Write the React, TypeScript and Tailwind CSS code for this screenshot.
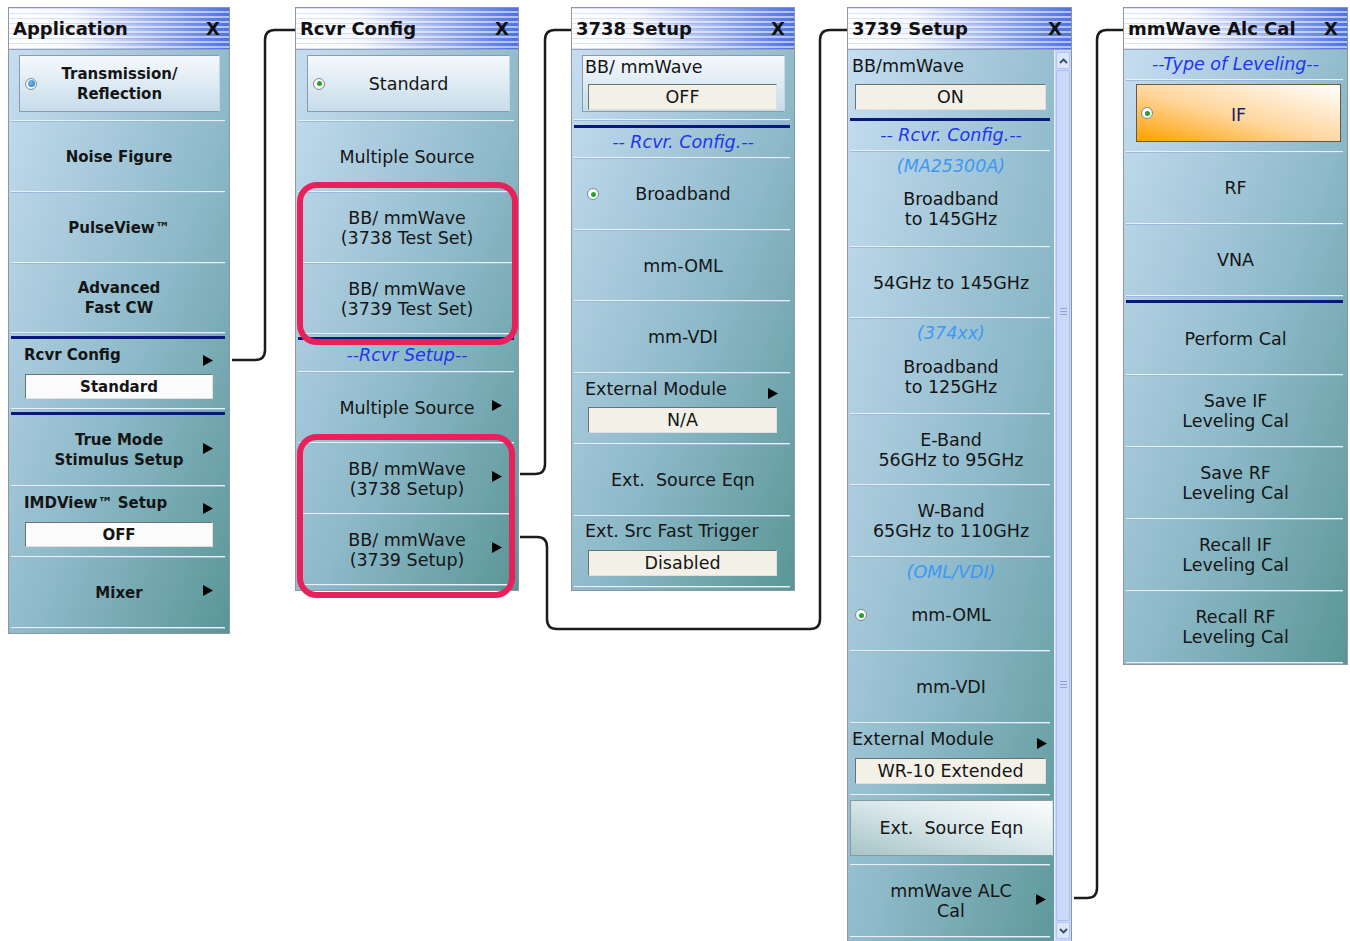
import clsx from 'clsx'
import type { ReactNode } from 'react'

const BODY = 'bg-[linear-gradient(to_bottom_right,#c6ddf1,#8db9c9_55%,#5a9696)]'

function Header({ title }: { title: string }) {
  return (
    <div className="flex h-[42px] items-center justify-between border-b border-[#9aa3ad] bg-[repeating-linear-gradient(180deg,rgba(70,105,220,0.18)_0px,rgba(70,105,220,0.18)_1px,transparent_1px,transparent_3px,rgba(255,255,255,0.55)_3px,rgba(255,255,255,0.55)_5px),linear-gradient(90deg,#ffffff_0%,#f2f5fd_30%,#4d72e3_100%)] pl-[4px] pr-[9px]">
      <span className="whitespace-nowrap text-[18px] font-bold text-[#111]">{title}</span>
      <span className="text-[18px] font-bold text-[#111]">X</span>
    </div>
  )
}

function Panel({
  title,
  className,
  bodyClass,
  children,
}: {
  title: string
  className: string
  bodyClass: string
  children: ReactNode
}) {
  return (
    <div className={clsx('shrink-0 border border-[#8e979f] bg-white', className)}>
      <Header title={title} />
      <div className={clsx(BODY, 'text-[#151515]', bodyClass)}>{children}</div>
    </div>
  )
}

function Sep() {
  return <div className="ml-[2px] mr-[4px] h-[2px] bg-[linear-gradient(#e9f1fa_50%,#9db9da_50%)]" />
}

function Navy({ className = '' }: { className?: string }) {
  return <div className={clsx('ml-[2px] mr-[4px] h-[3px] bg-[#0a1780]', className)} />
}

function Arrow({ className = '' }: { className?: string }) {
  return (
    <svg width="10" height="11" viewBox="0 0 10 11" className={clsx('shrink-0', className)}>
      <polygon points="0,0 10,5.5 0,11" fill="#000" />
    </svg>
  )
}

function Radio({ blue = false }: { blue?: boolean }) {
  return (
    <span className="flex h-[12px] w-[12px] items-center justify-center rounded-full border border-[#7d8c99] bg-[radial-gradient(circle,#ffffff_55%,#d5dde4)]">
      <span
        className={
          blue
            ? 'h-[7px] w-[7px] rounded-full bg-[radial-gradient(circle_at_40%_40%,#74bbf2,#1f6db6)]'
            : 'h-[5px] w-[5px] rounded-full bg-[#26a326]'
        }
      />
    </span>
  )
}

function Lines({ lines }: { lines: string[] }) {
  return (
    <div className="flex flex-col items-center whitespace-nowrap leading-[20px]">
      {lines.map((l) => (
        <span key={l}>{l}</span>
      ))}
    </div>
  )
}

function Cell({
  h,
  lines,
  radio,
  radioCls = 'ml-[5px]',
  arrow,
  arrowCls = 'ml-[2px]',
}: {
  h: string
  lines: string[]
  radio?: ReactNode
  radioCls?: string
  arrow?: boolean
  arrowCls?: string
}) {
  return (
    <div className={clsx('grid grid-cols-[28px_minmax(0,1fr)_28px] items-center', h)}>
      <div className={clsx('flex', radioCls)}>{radio}</div>
      <Lines lines={lines} />
      <div className="flex">{arrow && <Arrow className={clsx('mb-[4px]', arrowCls)} />}</div>
    </div>
  )
}

function Field({ className, white, children }: { className: string; white?: boolean; children: ReactNode }) {
  return (
    <div
      className={clsx(
        'flex items-center justify-center whitespace-nowrap border border-t-[#707070] border-l-[#707070] border-b-[#e0e0e0] border-r-[#e0e0e0] leading-[20px]',
        white ? 'bg-[#fbfbfb]' : 'bg-[#f3f1e7]',
        className
      )}
    >
      {children}
    </div>
  )
}

function FieldCell({
  h,
  label,
  value,
  arrow,
  rowCls,
  arrowCls = '',
  fieldCls,
  white,
}: {
  h: string
  label: string
  value: string
  arrow?: boolean
  rowCls: string
  arrowCls?: string
  fieldCls: string
  white?: boolean
}) {
  return (
    <div className={h}>
      <div className={clsx('flex items-start justify-between leading-[20px]', rowCls)}>
        <span className="whitespace-nowrap">{label}</span>
        {arrow && <Arrow className={arrowCls} />}
      </div>
      <Field className={fieldCls} white={white}>
        {value}
      </Field>
    </div>
  )
}

function SelBox({ className, lines, blue }: { className: string; lines: string[]; blue?: boolean }) {
  return (
    <div
      className={clsx(
        'grid h-[57px] grid-cols-[24px_minmax(0,1fr)_24px] items-center border border-[#8d99a3] border-r-[#c9d7e0] bg-[linear-gradient(to_bottom,#f5f9fc,#c6dcea)]',
        className
      )}
    >
      <div className="flex pl-[5px]">
        <Radio blue={blue} />
      </div>
      <Lines lines={lines} />
      <div />
    </div>
  )
}

function Section({ h, text, light }: { h: string; text: string; light?: boolean }) {
  return (
    <div
      className={clsx(
        'flex items-center justify-center whitespace-nowrap italic',
        h,
        light ? 'text-[#3d98f4]' : 'text-[#1f34f2]'
      )}
    >
      {text}
    </div>
  )
}

function SubCell({
  h,
  sub,
  lines,
  gap,
  radio,
}: {
  h: string
  sub: string
  lines: string[]
  gap: string
  radio?: boolean
}) {
  return (
    <div className={clsx('flex flex-col', h)}>
      <div className="flex justify-center pt-[4px] italic leading-[20px] text-[#3d98f4]">{sub}</div>
      <div className={clsx('grid grid-cols-[28px_minmax(0,1fr)_28px] items-center', gap)}>
        <div className="ml-[7px] flex">{radio && <Radio />}</div>
        <Lines lines={lines} />
        <div />
      </div>
    </div>
  )
}

function Grip() {
  return (
    <div className="flex flex-col gap-[2px]">
      <div className="h-px w-[7px] bg-[#8ea4e0]" />
      <div className="h-px w-[7px] bg-[#8ea4e0]" />
      <div className="h-px w-[7px] bg-[#8ea4e0]" />
    </div>
  )
}

function ScrollBar() {
  return (
    <div className="flex w-[17px] shrink-0 flex-col border-l border-[#e8eefc] bg-[#c7d5fb]">
      <div className="mx-[1px] mt-[2px] flex h-[17px] items-center justify-center rounded-[2px] border border-[#b4c6f4] bg-[#dbe5fd]">
        <svg width="9" height="6" viewBox="0 0 9 6">
          <path d="M1 5 L4.5 1.5 L8 5" stroke="#3b4868" strokeWidth="1.8" fill="none" />
        </svg>
      </div>
      <div className="mx-[1px] mt-[1px] flex flex-1 flex-col items-center rounded-[2px] border border-[#aebff0] bg-[#cad8fc]">
        <div className="mt-[237px]">
          <Grip />
        </div>
        <div className="mt-[366px]">
          <Grip />
        </div>
      </div>
      <div className="mx-[1px] mb-[2px] mt-[1px] flex h-[17px] items-center justify-center rounded-[2px] border border-[#b4c6f4] bg-[#dbe5fd]">
        <svg width="9" height="6" viewBox="0 0 9 6">
          <path d="M1 1 L4.5 4.5 L8 1" stroke="#3b4868" strokeWidth="1.8" fill="none" />
        </svg>
      </div>
    </div>
  )
}

function Connectors() {
  return (
    <svg className="pointer-events-none absolute left-0 top-0" width="1350" height="941" viewBox="0 0 1350 941">
      <g stroke="#1c1c1c" strokeWidth="2.5" fill="none">
        <path d="M232 360 H255 Q265 360 265 350 V40 Q265 30 275 30 H295" />
        <path d="M520 474 H535 Q545 474 545 464 V40 Q545 30 555 30 H571" />
        <path d="M520 537 H537 Q547 537 547 547 V619 Q547 629 557 629 H810 Q820 629 820 619 V40 Q820 30 830 30 H847" />
        <path d="M1074 898 H1087 Q1097 898 1097 888 V40 Q1097 30 1107 30 H1123" />
      </g>
    </svg>
  )
}

export default function App() {
  return (
    <div className="relative h-[941px] w-[1350px] overflow-hidden bg-white font-['DejaVu_Sans',sans-serif]">
      <div className="flex items-start pt-[7px]">
        {/* Application */}
        <Panel title="Application" className="ml-[8px] w-[222px]" bodyClass="pb-[4px] text-[15px] font-bold">
          <div className="h-[70px] pt-[5px]">
            <SelBox className="ml-[10px] mr-[9px]" lines={['Transmission/', 'Reflection']} blue />
          </div>
          <Sep />
          <Cell h="h-[69px]" lines={['Noise Figure']} />
          <Sep />
          <Cell h="h-[69px]" lines={['PulseView™']} />
          <Sep />
          <Cell h="h-[68px]" lines={['Advanced', 'Fast CW']} />
          <Sep />
          <Navy className="mt-[2px]" />
          <FieldCell
            h="h-[69px]"
            label="Rcvr Config"
            value="Standard"
            arrow
            white
            rowCls="pl-[15px] pr-[16px] pt-[6px]"
            arrowCls="mt-[10px]"
            fieldCls="mx-[16px] mt-[8px] h-[25px]"
          />
          <Sep />
          <Navy className="mt-[2px]" />
          <Cell h="h-[70px]" lines={['True Mode', 'Stimulus Setup']} arrow />
          <Sep />
          <FieldCell
            h="h-[69px]"
            label="IMDView™ Setup"
            value="OFF"
            arrow
            white
            rowCls="pl-[15px] pr-[16px] pt-[6px]"
            arrowCls="mt-[10px]"
            fieldCls="mx-[16px] mt-[8px] h-[25px]"
          />
          <Sep />
          <Cell h="h-[69px]" lines={['Mixer']} arrow />
          <Sep />
        </Panel>

        {/* Rcvr Config */}
        <Panel title="Rcvr Config" className="ml-[65px] w-[224px]" bodyClass="pb-[4px] text-[17.5px]">
          <div className="h-[70px] pt-[5px]">
            <SelBox className="ml-[11px] mr-[8px]" lines={['Standard']} />
          </div>
          <Sep />
          <Cell h="h-[69px]" lines={['Multiple Source']} />
          <Sep />
          <Cell h="h-[69px]" lines={['BB/ mmWave', '(3738 Test Set)']} />
          <Sep />
          <Cell h="h-[69px]" lines={['BB/ mmWave', '(3739 Test Set)']} />
          <Sep />
          <Navy className="mt-[2px]" />
          <Section h="h-[31px]" text="--Rcvr Setup--" />
          <Sep />
          <Cell h="h-[69px]" lines={['Multiple Source']} arrow />
          <Sep />
          <Cell h="h-[69px]" lines={['BB/ mmWave', '(3738 Setup)']} arrow />
          <Sep />
          <Cell h="h-[69px]" lines={['BB/ mmWave', '(3739 Setup)']} arrow />
          <Sep />
        </Panel>

        {/* 3738 Setup */}
        <Panel title="3738 Setup" className="ml-[52px] w-[224px]" bodyClass="pb-[2px] text-[17.5px]">
          <div className="h-[69px] pt-[5px]">
            <div className="ml-[10px] mr-[9px] h-[57px] border border-[#8d99a3] border-r-[#c9d7e0] bg-[linear-gradient(to_bottom,#f5f9fc,#c6dcea)]">
              <div className="pl-[2px] pt-px leading-[20px]">BB/ mmWave</div>
              <Field className="ml-[5px] mr-[7px] mt-[7px] h-[26px]">OFF</Field>
            </div>
          </div>
          <Sep />
          <Navy className="mt-[4px]" />
          <Section h="h-[29px]" text="-- Rcvr. Config.--" />
          <Sep />
          <Cell h="h-[70px]" lines={['Broadband']} radio={<Radio />} radioCls="ml-[15px]" />
          <Sep />
          <Cell h="h-[69px]" lines={['mm-OML']} />
          <Sep />
          <Cell h="h-[70px]" lines={['mm-VDI']} />
          <Sep />
          <FieldCell
            h="h-[69px]"
            label="External Module"
            value="N/A"
            arrow
            rowCls="pl-[13px] pr-[16px] pt-[5px]"
            arrowCls="mt-[9px]"
            fieldCls="ml-[16px] mr-[17px] mt-[8px] h-[26px]"
          />
          <Sep />
          <Cell h="h-[70px]" lines={['Ext.\u00a0 Source Eqn']} />
          <Sep />
          <FieldCell
            h="h-[69px]"
            label="Ext. Src Fast Trigger"
            value="Disabled"
            rowCls="pl-[13px] pr-[16px] pt-[4px]"
            fieldCls="ml-[16px] mr-[17px] mt-[9px] h-[26px]"
          />
          <Sep />
        </Panel>

        {/* 3739 Setup */}
        <Panel title="3739 Setup" className="ml-[52px] w-[225px]" bodyClass="flex h-[891px] overflow-hidden text-[17.5px]">
          <div className="min-w-0 flex-1">
            <FieldCell
              h="h-[68px]"
              label="BB/mmWave"
              value="ON"
              rowCls="pl-[4px] pt-[6px]"
              fieldCls="ml-[7px] mr-[8px] mt-[8px] h-[26px]"
            />
            <Navy />
            <Section h="h-[29px]" text="-- Rcvr. Config.--" />
            <Sep />
            <SubCell h="h-[94px]" sub="(MA25300A)" lines={['Broadband', 'to 145GHz']} gap="mt-[13px]" />
            <Sep />
            <Cell h="h-[69px]" lines={['54GHz to 145GHz']} />
            <Sep />
            <SubCell h="h-[94px]" sub="(374xx)" lines={['Broadband', 'to 125GHz']} gap="mt-[14px]" />
            <Sep />
            <Cell h="h-[69px]" lines={['E-Band', '56GHz to 95GHz']} />
            <Sep />
            <Cell h="h-[70px]" lines={['W-Band', '65GHz to 110GHz']} />
            <Sep />
            <SubCell h="h-[92px]" sub="(OML/VDI)" lines={['mm-OML']} gap="mt-[23px]" radio />
            <Sep />
            <Cell h="h-[70px]" lines={['mm-VDI']} />
            <Sep />
            <FieldCell
              h="h-[70px]"
              label="External Module"
              value="WR-10 Extended"
              arrow
              rowCls="pl-[4px] pr-[7px] pt-[5px]"
              arrowCls="mt-[9px]"
              fieldCls="ml-[7px] mr-[8px] mt-[9px] h-[26px]"
            />
            <Sep />
            <div className="h-[68px] pt-[4px]">
              <div className="ml-[2px] mr-px flex h-[56px] items-center justify-center border border-[#8a9a9c] border-r-[#d5e2e4] bg-[linear-gradient(to_bottom_left,#fbfdfd,#dce9eb_45%,#a5c4c8)] leading-[20px]">
                Ext.&nbsp; Source Eqn
              </div>
            </div>
            <Sep />
            <Cell h="h-[70px]" lines={['mmWave ALC', 'Cal']} arrow arrowCls="ml-[10px]" />
            <Sep />
          </div>
          <ScrollBar />
        </Panel>

        {/* mmWave Alc Cal */}
        <Panel title="mmWave Alc Cal" className="ml-[51px] w-[225px]" bodyClass="text-[17.5px]">
          <Section h="h-[29px]" text="--Type of Leveling--" />
          <Sep />
          <div className="h-[70px] pt-[3px]">
            <div className="ml-[12px] mr-[6px] grid h-[58px] grid-cols-[24px_minmax(0,1fr)_24px] items-center border border-[#5a5a5a] border-t-[#7a5a30] bg-[linear-gradient(to_top_right,#ffa000,#ffd59a_45%,#ffffff)]">
              <div className="flex pl-[4px]">
                <Radio />
              </div>
              <div className="flex justify-center pt-[3px] leading-[20px] text-[#1c1c6b]">IF</div>
              <div />
            </div>
          </div>
          <Sep />
          <Cell h="h-[70px]" lines={['RF']} />
          <Sep />
          <Cell h="h-[70px]" lines={['VNA']} />
          <Sep />
          <Navy className="mt-[3px]" />
          <Cell h="h-[71px]" lines={['Perform Cal']} />
          <Sep />
          <Cell h="h-[70px]" lines={['Save IF', 'Leveling Cal']} />
          <Sep />
          <Cell h="h-[70px]" lines={['Save RF', 'Leveling Cal']} />
          <Sep />
          <Cell h="h-[70px]" lines={['Recall IF', 'Leveling Cal']} />
          <Sep />
          <Cell h="h-[70px]" lines={['Recall RF', 'Leveling Cal']} />
          <Sep />
        </Panel>
      </div>

      <Connectors />

      {/* highlight outlines */}
      <div className="pointer-events-none absolute left-[297px] top-[182px] h-[163px] w-[221px] rounded-[20px] border-[6px] border-[#e8215a]" />
      <div className="pointer-events-none absolute left-[297px] top-[434px] h-[164px] w-[218px] rounded-[20px] border-[6px] border-[#e8215a]" />
    </div>
  )
}
